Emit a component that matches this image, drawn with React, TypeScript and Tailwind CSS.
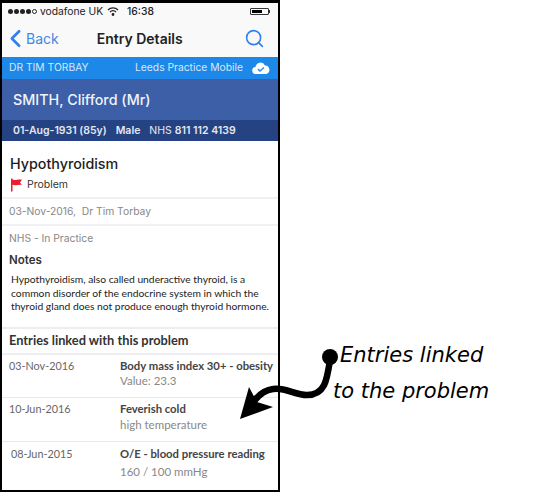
import React from "react";
import { ChevronLeft, Search } from "lucide-react";

const Entry = ({ date, title, sub, cls, subCls, dateCls = "w-[111px]" }: { date: string; title: string; sub: string; cls: string; subCls: string; dateCls?: string }) => (
  <div className={`flex ${cls}`}>
    <div className={`shrink-0 text-[10.8px] leading-[14px] text-[#666] ${dateCls}`}>{date}</div>
    <div className="min-w-0">
      <div className="whitespace-nowrap text-[11.3px] font-bold leading-[14px] text-[#444]">{title}</div>
      <div className={`whitespace-nowrap text-[11.5px] leading-[14px] text-[#888] ${subCls}`}>{sub}</div>
    </div>
  </div>
);

export default function App() {
  return (
    <div className="relative h-[493px] w-[552px] overflow-hidden bg-white font-['Inter',sans-serif]">
      <div className="flex h-[492px] w-[280px] flex-col overflow-hidden border-2 border-t-[3px] border-black bg-white">
        <div className="flex h-[17px] shrink-0 items-center bg-[#f9f9f9] pl-[6px] text-[#222]">
          <div className="flex gap-[1px]">
            <span className="h-[5px] w-[5px] rounded-full bg-[#222]" />
            <span className="h-[5px] w-[5px] rounded-full bg-[#222]" />
            <span className="h-[5px] w-[5px] rounded-full bg-[#222]" />
            <span className="h-[5px] w-[5px] rounded-full bg-[#222]" />
            <span className="h-[5px] w-[5px] rounded-full border border-[#222]" />
          </div>
          <span className="ml-[3px] whitespace-nowrap text-[10.3px]">vodafone UK</span>
          <svg className="ml-[4px]" width="12" height="9" viewBox="0 0 12 9" fill="none" stroke="#222" strokeWidth="1.2">
            <path d="M1 3a7 7 0 0 1 10 0M3 5a4 4 0 0 1 6 0" />
            <circle cx="6" cy="7.500" r="0.8" fill="#222" />
          </svg>
          <span className="ml-[8px] text-[10.3px] font-medium">16:38</span>
          <div className="ml-[96px] flex h-[7px] w-[19px] items-center rounded-[1px] border border-[#333] p-[1px]">
            <div className="h-full w-[10px] bg-black" />
          </div>
          <div className="h-[3px] w-[1px] bg-[#333]" />
        </div>
        <div className="flex h-[37px] shrink-0 items-center bg-[#f9f9f9] text-[14px]">
          <ChevronLeft className="ml-[-1px] shrink-0 text-[#2f80ed]" size={29} strokeWidth={2.2} />
          <span className="ml-[-4px] text-[#3b8ae6]">Back</span>
          <span className="ml-[38px] whitespace-nowrap font-semibold text-[#222]">Entry Details</span>
          <Search className="ml-auto mr-[13px] shrink-0 text-[#2f80ed]" size={21} strokeWidth={1.8} />
        </div>
        <div className="flex h-[22px] shrink-0 items-center justify-between bg-[#1e88e8] pl-[7px] pr-[8px] text-[10.3px] text-[#d5e6fa]">
          <span>DR TIM TORBAY</span>
          <div className="flex items-center gap-[9px]">
            <span>Leeds Practice Mobile</span>
            <svg width="18" height="12" viewBox="0 0 18 12">
              <path d="M4 12a3.500 3.500 0 0 1-.5-7A5 5 0 0 1 13 3.500 4.300 4.300 0 0 1 14 12z" fill="#fff" />
              <path d="M6 7l2 2 4-3.500" fill="none" stroke="#1e88e8" strokeWidth="1.3" />
            </svg>
          </div>
        </div>
        <div className="flex h-[41px] shrink-0 items-center bg-[#3c5fa8] pl-[11px] text-[14.3px] font-medium text-[#f0f3fa]">SMITH, Clifford (Mr)</div>
        <div className="flex h-[21px] shrink-0 items-center whitespace-nowrap bg-[#254282] pl-[11px] text-[10.5px] font-semibold text-[#e3e8f3]">
          <span>01-Aug-1931 (85y)</span>
          <span className="ml-[9px]">Male</span>
          <span className="ml-[9px] font-normal">NHS</span>
          <span className="ml-[3px]">811 112 4139</span>
        </div>

        <div className="h-[58px] shrink-0 border-b-2 border-[#f0f0f5] pl-[8px] pt-[14px]">
          <div className="text-[14.3px] font-medium leading-[18px] text-[#1c1c1c]">Hypothyroidism</div>
          <div className="mt-[5px] flex items-center text-[10.5px] leading-[14px] text-[#333]">
            <svg className="shrink-0" width="13" height="14" viewBox="0 0 13 14">
              <path d="M1 0.500h1.500v1c3 1.500 5-.5 9.500.2L10 4.500l2 2.500c-3-.8-5.500 1-9.500-.2V13.500H1z" fill="#ee1c2e" />
            </svg>
            <span className="ml-[4px]">Problem</span>
          </div>
        </div>
        <div className="h-[27px] shrink-0 border-b-2 border-[#f0f0f5] pl-[7px] text-[10.3px] leading-[25px] text-[#888]">03-Nov-2016,&nbsp; Dr Tim Torbay</div>
        <div className="pl-[7px] pt-[4px] text-[10.3px] leading-[16px] text-[#888]">NHS - In Practice</div>
        <div className="pl-[7px] pt-[6px] text-[11.5px] font-semibold leading-[16px] text-[#333]">Notes</div>
        <div className="pl-[9px] pr-[2px] pt-[5px] font-['Lato',sans-serif] text-[10.3px] leading-[13.500px] text-[#222]">
          Hypothyroidism, also called underactive thyroid, is a common disorder of the endocrine system in which the thyroid gland does not produce enough thyroid hormone.
        </div>
        <div className="mt-[13px] h-[28px] shrink-0 border-y-2 border-[#eeeef2] pl-[7px] font-['Lato',sans-serif] text-[12.8px] font-bold leading-[22px] text-[#333]">Entries linked with this problem</div>
        <div className="font-['Lato',sans-serif]">
          <Entry date="03-Nov-2016" title="Body mass index 30+ - obesity" sub="Value: 23.3" cls="h-[43px] border-b border-[#e8e8ec] pl-[7px] pt-[4px]" subCls="mt-[1px]" />
          <Entry date="10-Jun-2016" title="Feverish cold" sub="high temperature" cls="h-[44px] border-b border-[#e8e8ec] pl-[7px] pt-[4px]" subCls="mt-[2px]" />
          <Entry date="08-Jun-2015" title="O/E - blood pressure reading" sub="160 / 100 mmHg" cls="pl-[9px] pt-[5px]" dateCls="w-[109px]" subCls="mt-[4px]" />
        </div>
      </div>

      <svg className="absolute left-[235px] top-[345px]" width="100" height="80" viewBox="0 0 100 80" fill="none">
        <path d="M95 15C92 35 90 50 72 50C60 50 50 42 38 44C30 45 24 50 20 55" stroke="#000" strokeWidth="6.500" strokeLinecap="round" />
        <path d="M14 42L5 74L38 62L22 57z" fill="#000" />
      </svg>
      <div className="absolute left-[322px] top-[349px] h-[16px] w-[16px] rounded-full bg-black" />
      <div className="absolute left-[340px] top-[340px] whitespace-nowrap font-['DejaVu_Sans',sans-serif] text-[21px] italic text-black">Entries linked</div>
      <div className="absolute left-[333px] top-[376px] whitespace-nowrap font-['DejaVu_Sans',sans-serif] text-[21px] italic text-black">to the problem</div>
    </div>
  );
}
